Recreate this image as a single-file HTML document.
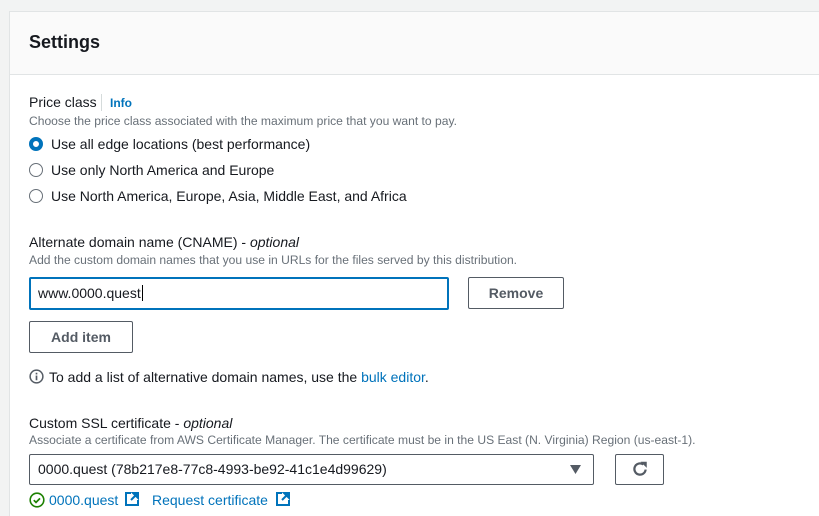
<!DOCTYPE html>
<html><head><meta charset="utf-8"><style>
*{box-sizing:border-box;margin:0;padding:0}
html,body{width:819px;height:516px;overflow:hidden}
body{background:#f2f3f3;font-family:"Liberation Sans",sans-serif;color:#16191f;position:relative}
.card{position:absolute;left:9px;top:11px;width:820px;height:510px;background:#fff;border:1px solid #e1e4e5}
.hdr{position:absolute;left:0;top:0;right:0;height:63px;background:#fafafa;border-bottom:1px solid #e1e4e5}
.a{position:absolute;white-space:nowrap}
.h{left:19px;top:20px;font-size:18px;font-weight:bold}
.l{font-size:14px}
.d{font-size:12.1px;color:#687078}
.rad{position:absolute;width:14px;height:14px;border-radius:50%;border:1.5px solid #687078;background:#fff}
.rad.on{border:4px solid #0073bb}
.btn{position:absolute;border:1px solid #545b64;border-radius:2px;background:#fff;font-weight:bold;font-size:14px;color:#545b64;text-align:center}
.link{color:#0073bb}
</style></head><body>
<div class="card">
<div class="hdr"><div class="a h">Settings</div></div>
</div>
<div class="a l" style="left:29px;top:94px">Price class</div>
<div class="a" style="left:101px;top:94px;width:1px;height:17px;background:#d5dbdb"></div>
<div class="a link" style="left:110px;top:96px;font-size:12px;font-weight:bold">Info</div>
<div class="a d" style="left:29px;top:114px">Choose the price class associated with the maximum price that you want to pay.</div>
<div class="rad on" style="left:29px;top:137px"></div><div class="a l" style="left:51px;top:136px">Use all edge locations (best performance)</div>
<div class="rad" style="left:29px;top:163px"></div><div class="a l" style="left:51px;top:162px">Use only North America and Europe</div>
<div class="rad" style="left:29px;top:189px"></div><div class="a l" style="left:51px;top:188px">Use North America, Europe, Asia, Middle East, and Africa</div>
<div class="a l" style="left:29px;top:234px">Alternate domain name (CNAME) - <i>optional</i></div>
<div class="a d" style="left:29px;top:253px">Add the custom domain names that you use in URLs for the files served by this distribution.</div>
<div class="a" style="left:29px;top:277px;width:420px;height:33px;border:2px solid #0073bb;border-radius:2px;background:#fff"></div>
<div class="a l" style="left:38px;top:285px">www.0000.quest<span style="border-left:1px solid #000;margin-left:1px"></span></div>
<div class="btn" style="left:468px;top:277px;width:96px;height:32px;line-height:30px">Remove</div>
<div class="btn" style="left:29px;top:321px;width:104px;height:32px;line-height:30px">Add item</div>
<svg class="a" style="left:29px;top:369px" width="15" height="15" viewBox="0 0 16 16"><circle cx="8" cy="8" r="6.8" fill="none" stroke="#545b64" stroke-width="1.6"/><rect x="7.1" y="7" width="1.8" height="5" fill="#545b64"/><rect x="7.1" y="4" width="1.8" height="1.8" fill="#545b64"/></svg>
<div class="a l" style="left:49px;top:369px">To add a list of alternative domain names, use the <span class="link">bulk editor</span>.</div>
<div class="a l" style="left:29px;top:415px">Custom SSL certificate - <i>optional</i></div>
<div class="a d" style="left:29px;top:433px">Associate a certificate from AWS Certificate Manager. The certificate must be in the US East (N. Virginia) Region (us-east-1).</div>
<div class="a" style="left:29px;top:454px;width:565px;height:31px;border:1px solid #545b64;border-radius:2px;background:#fff"></div>
<div class="a l" style="left:38px;top:461px">0000.quest (78b217e8-77c8-4993-be92-41c1e4d99629)</div>
<svg class="a" style="left:570px;top:465px" width="11" height="9"><path d="M0 0h11L5.5 9z" fill="#545b64"/></svg>
<div class="btn" style="left:615px;top:454px;width:49px;height:31px"></div>
<svg class="a" style="left:631px;top:460px" width="18" height="18" viewBox="0 0 16 16"><path d="M13 8.5A5 5 0 1 1 11 4" fill="none" stroke="#545b64" stroke-width="2"/><path d="M8.5 1.5h5.5v5.5z" fill="#545b64"/></svg>
<svg class="a" style="left:29px;top:492px" width="16" height="16" viewBox="0 0 16 16"><circle cx="8" cy="8" r="6.8" fill="none" stroke="#1d8102" stroke-width="1.6"/><path d="M4.8 8.2l2.2 2.2 4-4" fill="none" stroke="#1d8102" stroke-width="1.7"/></svg>
<div class="a l link" style="left:49px;top:492px">0000.quest</div>
<svg class="a" style="left:125px;top:492px" width="14" height="14" viewBox="0 0 14 14"><path d="M6 1H1v12h12V8" fill="none" stroke="#0073bb" stroke-width="2"/><path d="M8 1h5v5zM12 2L6 8" fill="#0073bb" stroke="#0073bb" stroke-width="2"/></svg>
<div class="a l link" style="left:152px;top:492px">Request certificate</div>
<svg class="a" style="left:276px;top:492px" width="14" height="14" viewBox="0 0 14 14"><path d="M6 1H1v12h12V8" fill="none" stroke="#0073bb" stroke-width="2"/><path d="M8 1h5v5zM12 2L6 8" fill="#0073bb" stroke="#0073bb" stroke-width="2"/></svg>
</body></html>
